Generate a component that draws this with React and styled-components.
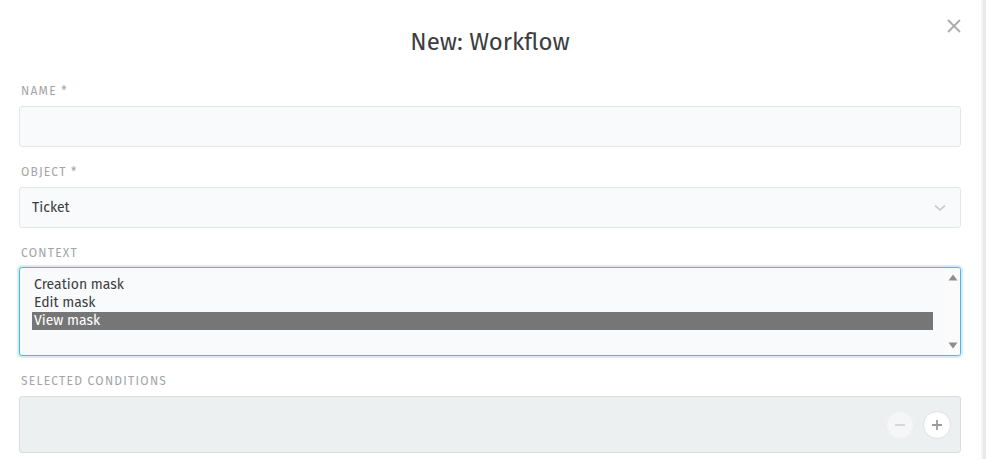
import React from "react";
import styled, { createGlobalStyle } from "styled-components";

const Global = createGlobalStyle`
  html, body { margin: 0; padding: 0; background: #fff; }
  body { font-family: "Fira Sans", "Open Sans", "Noto Sans", sans-serif; }
  * { box-sizing: border-box; }
`;

const Page = styled.div`
  display: flex;
  width: 986px;
  height: 459px;
  overflow: hidden;
`;

const Modal = styled.div`
  width: 981px;
  flex: none;
  background: #fff;
  padding: 0 20px 0 19px;
  position: relative;
`;

const Edge = styled.div`
  flex: 1;
  background: #e9e9ea;
  border-left: 2px solid #f4f4f4;
`;

const Header = styled.div`
  height: 82px;
  display: flex;
  justify-content: center;
  padding-top: 26px;
`;

const Title = styled.h1`
  margin: 0;
  font-size: 24px;
  line-height: 32px;
  font-weight: 400;
  color: #3b3d40;
`;

const Close = styled.button`
  position: absolute;
  top: 18px;
  right: 19px;
  width: 16px;
  height: 16px;
  padding: 0;
  border: 0;
  background: none;
  display: flex;
`;

const Group = styled.div`
  display: flex;
  flex-direction: column;
  margin-bottom: 16px;
`;

const Label = styled.label`
  font-size: 12px;
  line-height: 16px;
  letter-spacing: 1.25px;
  text-transform: uppercase;
  color: #a2a5a8;
  margin-bottom: ${(p) => (p.$tight ? "7px" : "8px")};
  padding: 1px 0 0 2px;
  height: 16px;
`;

const Input = styled.div`
  height: 41px;
  border: 1px solid #e3e5e7;
  border-radius: 3px;
  background: #f9fafb;
  display: flex;
  align-items: center;
  justify-content: space-between;
  padding: 0 14px 0 12px;
  font-size: 14px;
  color: #3b3d40;
`;

const Listbox = styled.div`
  height: 89px;
  border: 1px solid #50b6ea;
  border-radius: 3px;
  background: #f9fafb;
  box-shadow: 0 0 0 2px #d6ecf8;
  display: flex;
  overflow: hidden;
`;

const Options = styled.div`
  flex: 1;
  padding: 8px 12px 0 12px;
  display: flex;
  flex-direction: column;
`;

const Option = styled.div`
  height: 18px;
  line-height: 18px;
  font-size: 14px;
  padding-left: 2px;
  color: ${(p) => (p.$selected ? "#fff" : "#3b3d40")};
  background: ${(p) => (p.$selected ? "#767676" : "transparent")};
`;

const Scrollbar = styled.div`
  width: 15px;
  background: #fbfbfc;
  display: flex;
  flex-direction: column;
  justify-content: space-between;
  align-items: center;
  padding: 6px 0 6px;
`;

const Conditions = styled.div`
  height: 57px;
  border: 1px solid #dadddf;
  border-radius: 3px;
  background: #edf0f1;
  display: flex;
  align-items: center;
  justify-content: flex-end;
  gap: 9px;
  padding-right: 9px;
`;

const Round = styled.button`
  width: 28px;
  height: 28px;
  border-radius: 50%;
  border: 1px solid ${(p) => (p.$disabled ? "#eef0f1" : "#dfe2e4")};
  background: ${(p) => (p.$disabled ? "#f5f6f7" : "#fff")};
  display: flex;
  align-items: center;
  justify-content: center;
  padding: 0;
`;

const Tri = ({ up }) => (
  <svg width="10" height="7" viewBox="0 0 10 7">
    <path d={up ? "M5 0.5 L9.5 6.5 L0.5 6.5 Z" : "M0.5 0.5 L9.5 0.5 L5 6.5 Z"} fill="#8e8e8e" />
  </svg>
);

export default function App() {
  return (
    <>
      <Global />
      <Page>
        <Modal>
          <Header>
            <Title>New: Workflow</Title>
          </Header>
          <Close aria-label="close">
            <svg width="16" height="16" viewBox="0 0 16 16">
              <path d="M2 2 L14 14 M14 2 L2 14" stroke="#acacac" strokeWidth="1.8" />
            </svg>
          </Close>
          <Group>
            <Label>Name *</Label>
            <Input />
          </Group>
          <Group>
            <Label>Object *</Label>
            <Input>
              <span>Ticket</span>
              <svg width="12" height="8" viewBox="0 0 12 8">
                <path d="M1 1.5 L6 6 L11 1.5" stroke="#cdd0d2" strokeWidth="1.8" fill="none" />
              </svg>
            </Input>
          </Group>
          <Group>
            <Label $tight>Context</Label>
            <Listbox>
              <Options>
                <Option>Creation mask</Option>
                <Option>Edit mask</Option>
                <Option $selected>View mask</Option>
              </Options>
              <Scrollbar>
                <Tri up />
                <Tri />
              </Scrollbar>
            </Listbox>
          </Group>
          <Group>
            <Label>Selected Conditions</Label>
            <Conditions>
              <Round $disabled aria-label="remove">
                <svg width="12" height="12" viewBox="0 0 12 12">
                  <path d="M1 6 H11" stroke="#d3d6d8" strokeWidth="1.8" />
                </svg>
              </Round>
              <Round aria-label="add">
                <svg width="12" height="12" viewBox="0 0 12 12">
                  <path d="M1 6 H11 M6 1 V11" stroke="#9a9da0" strokeWidth="1.8" />
                </svg>
              </Round>
            </Conditions>
          </Group>
        </Modal>
        <Edge />
      </Page>
    </>
  );
}
